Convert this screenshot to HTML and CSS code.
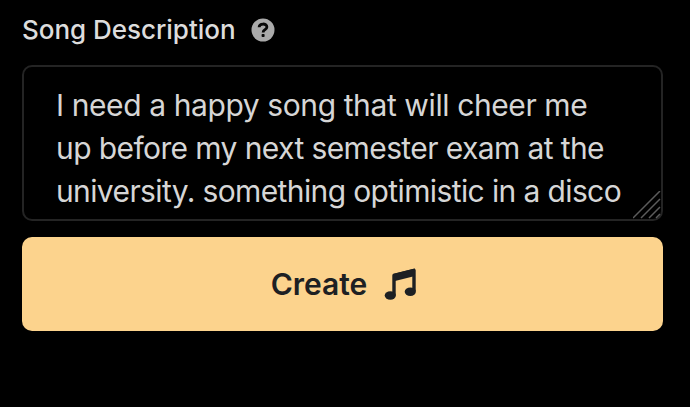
FILE: index.html
```html
<!DOCTYPE html>
<html lang="en">
<head>
<meta charset="utf-8">
<title>Song Description</title>
<link rel="stylesheet" href="styles.css">
</head>
<body>
<main class="panel">
  <div class="label-row">
    <span class="label">Song Description</span>
    <svg class="help" viewBox="0 0 24 24"><circle cx="12" cy="12" r="11.5" fill="#aaa"/><path d="M8.1 9.2C8.3 5 15.9 5 15.9 9C15.9 11.7 12.1 11.6 12.1 14.4" fill="none" stroke="#080808" stroke-width="2.8"/><rect x="10.6" y="16" width="3" height="3" rx=".8" fill="#080808"/></svg>
  </div>
  <div class="field">
    <div class="line line-1">I need a happy song that will cheer me</div>
    <div class="line">up before my next semester exam at the</div>
    <div class="line line-3">university. something optimistic in a disco</div>
    <svg class="grip" viewBox="0 0 28 28"><path d="M0 27L27 0M8 27L27 8M16 27L27 16M23 27L27 23" fill="none" stroke="#5c5c5c" stroke-width="1.5"/></svg>
  </div>
  <button class="create">
    <span>Create</span>
    <svg class="note" viewBox="0 0 34 34"><path d="M11 28V8.500L31 3.500V24" fill="none" stroke="#1d2023" stroke-width="3.400" stroke-linejoin="round"/><path d="M10 7L32 1.500V9L10 14.500Z" fill="#1d2023"/><ellipse cx="7.300" cy="28.500" rx="5.600" ry="4.200" fill="#1d2023"/><ellipse cx="27.300" cy="24.800" rx="5.600" ry="4.200" fill="#1d2023"/></svg>
  </button>
</main>
</body>
</html>
```
FILE: styles.css
```css
* { box-sizing: border-box; }
body { margin: 0; background: #000; font-family: "Inter", "Liberation Sans", sans-serif; }
.panel { width: 690px; height: 407px; padding: 14px 27px 0 22px; }
.label-row { display: flex; align-items: center; height: 32px; gap: 16px; }
.label { width: 213px; white-space: nowrap; font-size: 26px; font-weight: 500; line-height: 30px; letter-spacing: -0.03px; color: #ddd; }
.help { width: 24px; height: 24px; }
.field { position: relative; height: 156px; margin-top: 19px; padding: 17px 32px; border: 2px solid #242424; border-radius: 10px; }
.line { height: 43px; line-height: 43px; font-size: 30px; letter-spacing: -0.6px; color: #d6d6d6; white-space: nowrap; }
.line-1 { letter-spacing: -0.4px; }
.line-3 { letter-spacing: -0.62px; }
.grip { position: absolute; right: 0; bottom: 0; width: 28px; height: 28px; }
.create { display: flex; align-items: center; justify-content: center; gap: 16px; width: 100%; height: 94px; margin-top: 16px; padding: 0 0 0 3px; border: 0; border-radius: 10px; background: #fcd38d; color: #1d2023; font: 600 30px "Inter", "Liberation Sans", sans-serif; }
.note { width: 34px; height: 34px; }
```
